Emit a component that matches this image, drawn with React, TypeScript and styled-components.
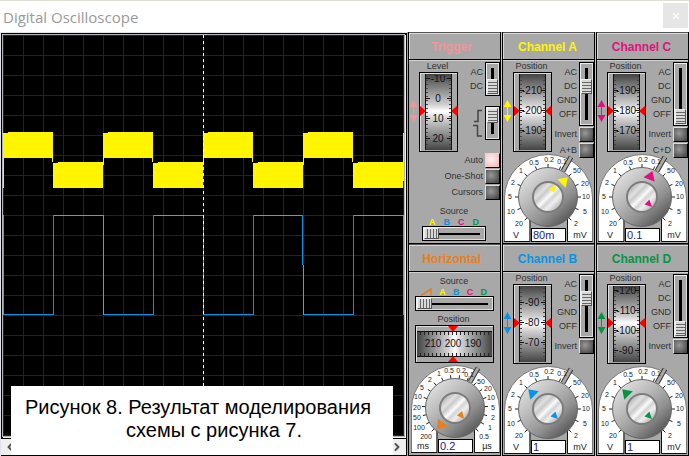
import React, { useState } from "react";
import styled, { createGlobalStyle, css } from "styled-components";
import { X, ChevronLeft, ChevronRight } from "lucide-react";

const YELLOW = "#fff500";
const BLUE = "#0a93e0";
const MAGENTA = "#e0117f";
const GREEN = "#079445";
const PINK = "#f0959b";
const ORANGE = "#e87e1c";
const PANEL = "#a8a8a8";

const GlobalStyle = createGlobalStyle`
  * { box-sizing: border-box; }
  body {
    margin: 0;
    background: ${PANEL};
    color: #303030;
    font-family: "Liberation Sans", Arial, sans-serif;
    font-size: 9px;
  }
  input, button { font: inherit; color: inherit; margin: 0; padding: 0; border-radius: 0; }
`;

const Window = styled.div`
  min-height: 100vh;
  display: flex;
  flex-direction: column;
`;

const TitleBar = styled.header`
  height: 32px;
  flex: none;
  display: flex;
  align-items: flex-start;
  justify-content: space-between;
  background: #fff;
  border-top: 1px solid #dedfd3;
  padding: 2px 1px 0 3px;
`;

const Title = styled.h1`
  margin: 0;
  font: 400 15px/28px "Open Sans", "Noto Sans", sans-serif;
  color: #999;
`;

const CloseButton = styled.button`
  width: 25px;
  height: 25px;
  display: flex;
  align-items: center;
  justify-content: center;
  border: 0;
  background: #e6e6e6;
  color: #fff;
`;

const Main = styled.main`
  flex: 1;
  display: grid;
  grid-template-columns: minmax(0, 1fr) auto;
  column-gap: 1px;
`;

/* ---------- scope screen ---------- */

const Scope = styled.section`
  position: relative;
  display: flex;
  flex-direction: column;
  padding: 1px 0 0 1px;
  background: #e3e1e8;
`;

const Screen = styled.div`
  flex: 1;
  display: flex;
  min-height: 0;
  border: 1px solid #000;
  background: #000;

  svg {
    flex: 1;
    min-width: 0;
    border: 1px solid #b4b4b4;
    box-shadow: 1px 1px 0 #f0f0f0;
    margin: 0 1px 1px 0;
  }
`;

const ScrollBar = styled.div`
  height: 17px;
  flex: none;
  display: flex;
  align-items: center;
  justify-content: space-between;
  background: #f0f0f0;
  border-right: 1px solid #000;
  border-bottom: 1px solid #000;
`;

const ScrollButton = styled.button`
  width: 18px;
  height: 16px;
  display: flex;
  align-items: center;
  justify-content: center;
  border: 0;
  background: transparent;
  color: #555;
`;

const Caption = styled.p`
  position: absolute;
  left: 11px;
  right: 14px;
  bottom: 1px;
  margin: 0;
  padding: 10px 14px 13px 6px;
  background: #fff;
  color: #000;
  font-size: 20px;
  line-height: 23px;
  text-align: center;
`;

const CaptionEnd = styled.span`
  display: block;
  padding-left: 32px;
`;

function Traces() {
  const highs = [0, 100, 200, 300];
  const lows = [50, 150, 250, 350];
  const grid = Array.from({ length: 21 }, (_, i) => i * 20);
  return (
    <svg viewBox="0 0 401 401" height="403" preserveAspectRatio="none" shapeRendering="crispEdges" role="img" aria-label="Waveforms">
      {grid.map((p) => (
        <g key={p} fill="#003c00">
          <rect x={p} y={0} width={1} height={401} />
          <rect x={0} y={p} width={401} height={1} />
        </g>
      ))}
      {highs.map((x) => (
        <g key={x} fill={YELLOW}>
          <rect x={x} y={98} width={50} height={25} />
          <rect x={x + 5} y={97} width={45} height={1} />
          <rect x={x} y={98} width={1} height={x === 0 ? 55 : 32} />
          <rect x={x + 49} y={109} width={1} height={18} />
        </g>
      ))}
      {lows.map((x) => (
        <g key={x} fill={YELLOW}>
          <rect x={x} y={128} width={50} height={25} />
          <rect x={x + 5} y={127} width={45} height={1} />
        </g>
      ))}
      <rect x={400} y={98} width={1} height={48} fill={YELLOW} />
      {highs.map((x) => (
        <g key={x}>
          <rect x={x} y={279} width={50} height={1} fill={BLUE} />
          <rect x={x} y={180} width={1} height={100} fill="#14bfdc" />
        </g>
      ))}
      {lows.map((x) => (
        <g key={x}>
          <rect x={x} y={180} width={50} height={1} fill="#14bfdc" />
          <rect x={x} y={180} width={1} height={100} fill={BLUE} />
        </g>
      ))}
      <rect x={299} y={180} width={1} height={50} fill={BLUE} />
      <rect x={300} y={180} width={1} height={50} fill="#003c00" />
      <rect x={400} y={180} width={1} height={100} fill="#14bfdc" />
      <line x1={200.5} y1={0} x2={200.5} y2={401} stroke="#fff" strokeDasharray="3 3" />
    </svg>
  );
}

/* ---------- control panels ---------- */

const Panels = styled.section`
  display: grid;
  grid-template-columns: repeat(3, 93px);
  grid-template-rows: 1fr 1fr;
  column-gap: 1px;
  background: #c4c4c4;
`;

const Panel = styled.section`
  display: flex;
  flex-direction: column;
  border: solid #000;
  border-width: 0 1px 1px;
  background: ${PANEL};
`;

const PanelTitle = styled.h2<{ $color: string; $shift?: boolean }>`
  height: 28px;
  margin: 0;
  padding-right: ${(p) => (p.$shift ? "6px" : "2px")};
  flex: none;
  border-top: 1px solid #555;
  border-bottom: 1px solid #000;
  box-shadow: inset 1px 1px 0 #d8d8d8, 0 1px 0 #d0d0d0;
  color: ${(p) => p.$color};
  font-size: 12px;
  font-weight: 700;
  line-height: 28px;
  text-align: center;
`;

const Upper = styled.div`
  display: grid;
  grid-template-columns: 10px 39px minmax(0, 1fr);
  grid-template-rows: 10px auto;
  padding-top: 2px;
`;

const RollerLabel = styled.label`
  grid-column: 2;
  grid-row: 1;
  justify-self: center;
  line-height: 9px;
  margin-right: 2px;
  white-space: nowrap;
`;

const ArrowCell = styled.div`
  grid-column: 1;
  grid-row: 2;
  display: flex;
  align-items: center;
  height: 78px;
`;

const RollerBox = styled.div`
  grid-column: 2;
  grid-row: 2;
  position: relative;
  height: 80px;

  svg { display: block; }
`;

const WideRollerBox = styled(RollerBox)`
  width: 79px;
  height: 38px;
`;

const HiddenRange = styled.input`
  position: absolute;
  inset: 0;
  width: 100%;
  height: 100%;
  opacity: 0;
`;

const Controls = styled.div`
  grid-column: 3;
  grid-row: 1 / span 2;
  display: flex;
  flex-direction: column;
`;

const SwitchRow = styled.div`
  display: flex;
  justify-content: flex-end;
  gap: 2px;
`;

const Options = styled.div`
  padding-top: 3px;
  line-height: 14px;
  text-align: right;
`;

const track = css`
  border: 1px solid #000;
  box-shadow: inset 1px 1px 0 #eee, inset -1px -1px 0 #ddd;
`;

const thumbColors = css`
  appearance: none;
  border: 1px solid #eee;
  border-right-color: #555;
  border-bottom-color: #555;
  border-radius: 0;
`;

const VerticalBox = styled.div`
  ${track}
  width: 15px;
  padding: 1px;
  display: flex;
  flex: none;
`;

const VerticalRange = styled.input<{ $length: number }>`
  appearance: none;
  writing-mode: vertical-lr;
  width: 11px;
  height: ${(p) => p.$length}px;
  background: linear-gradient(#000, #000) center / 3px calc(100% - 8px) no-repeat;

  &::-webkit-slider-thumb {
    ${thumbColors}
    width: 11px;
    height: 15px;
    background: repeating-linear-gradient(#d8d8d8 0 2px, #666 2px 3px);
  }
`;

const HorizontalBox = styled.div<{ $width: number }>`
  ${track}
  width: ${(p) => p.$width}px;
  padding: 1px;
  display: flex;
  margin: 0 auto;
`;

const HorizontalRange = styled.input`
  appearance: none;
  width: 100%;
  height: 11px;
  background: linear-gradient(#000, #000) center / calc(100% - 8px) 2px no-repeat;

  &::-webkit-slider-thumb {
    ${thumbColors}
    width: 15px;
    height: 11px;
    background: repeating-linear-gradient(90deg, #d8d8d8 0 2px, #666 2px 3px);
  }
`;

const ButtonRow = styled.div`
  display: flex;
  align-items: center;
  justify-content: flex-end;
  gap: 2px;
  height: 16px;
  white-space: nowrap;
`;

const PushButton = styled.button<{ $lit?: boolean }>`
  width: 15px;
  height: 15px;
  flex: none;
  border: 1px solid #ddd;
  border-right-color: #000;
  border-bottom-color: #000;
  background: ${(p) =>
    p.$lit
      ? "radial-gradient(circle at 40% 40%, #fff0f0, #f3b4b4)"
      : "radial-gradient(circle at 40% 40%, #989898, #3c3c3c)"};
`;

const DialBox = styled.div<{ $overlap?: boolean }>`
  position: relative;
  width: 89px;
  margin: ${(p) => (p.$overlap ? "-4px" : "2px")} 0 0 1px;

  svg { display: block; }
`;

const HorizontalDialBox = styled(DialBox)`
  margin-left: 2px;
`;

const DialInput = styled.input`
  position: absolute;
  left: 27px;
  bottom: 0;
  width: 35px;
  height: 14px;
  border: 1px solid #000;
  background: #fff;
  color: #1c1c8c;
  font-size: 11px;
  line-height: 12px;
  padding-left: 1px;
  outline: 0;
`;

const SourceBlock = styled.div<{ $top: number }>`
  margin-top: ${(p) => p.$top}px;
  display: flex;
  flex-direction: column;
  text-align: center;
  line-height: 12px;
  padding-right: 1px;
`;

const SourceLetters = styled.div<{ $width: number }>`
  display: flex;
  justify-content: space-between;
  align-items: center;
  width: ${(p) => p.$width}px;
  height: 9px;
  margin: 0 auto;
  font-weight: 700;
`;

const Letter = styled.span<{ $color: string }>`
  color: ${(p) => p.$color};
`;

const CenteredLabel = styled.label`
  display: block;
  padding: 3px 2px 0 0;
  text-align: center;
  line-height: 10px;
`;

const Stack = styled.div<{ $gap: number }>`
  display: flex;
  flex-direction: column;
  gap: ${(p) => p.$gap}px;
`;

const EdgeIcons = styled.svg`
  flex: none;
`;

function UpDown({ color }: { color: string }) {
  return (
    <svg width="9" height="24" viewBox="0 0 9 24" fill={color} aria-hidden="true">
      <path d="M4.5 1 8.5 8H.5zM4.5 23 .5 16h8z" />
      <path d="M4 7h1v10H4z" />
    </svg>
  );
}

type Mark = [string, number];

function Roller({ id, marks }: { id: string; marks: Mark[] }) {
  const ticks = Array.from({ length: 18 }, (_, i) => 5 + i * 4);
  return (
    <RollerBox>
      <svg width="39" height="80" viewBox="0 0 39 80">
        <defs>
          <linearGradient id={`${id}-drum`} x1="0" y1="0" x2="0" y2="1">
            <stop offset="0" stopColor="#444" />
            <stop offset=".2" stopColor="#8a8a8a" />
            <stop offset=".4" stopColor="#cfcfcf" />
            <stop offset=".49" stopColor="#fff" />
            <stop offset=".58" stopColor="#d4d4d4" />
            <stop offset=".8" stopColor="#8a8a8a" />
            <stop offset="1" stopColor="#444" />
          </linearGradient>
          <clipPath id={`${id}-clip`}>
            <rect x="7" y="3" width="25" height="74" />
          </clipPath>
        </defs>
        <rect x=".5" y=".5" width="38" height="79" fill={PANEL} stroke="#000" />
        <path d="M1.500 79V1.500H38" fill="none" stroke="#ddd" />
        <rect x="6" y="2" width="27" height="76" fill="#111" />
        <rect x="7" y="2" width="25" height="76" fill={`url(#${id}-drum)`} />
        <g clipPath={`url(#${id}-clip)`}>
          <path d={ticks.map((y) => `M7 ${y - 0.5}h2M30 ${y - 0.5}h2`).join("")} stroke="#444" />
          {marks.map(([text, y]) => (
            <g key={text}>
              <path d={`M7 ${y + 0.5}h4M28 ${y + 0.5}h4`} stroke="#111" />
              <text x="19" y={y + 4} textAnchor="middle" fontSize="10" fill="#101018">
                {text}
              </text>
            </g>
          ))}
        </g>
        <path d="M1 34v10l6-5zM38 34v10l-6-5z" fill="#f00" />
      </svg>
      <HiddenRange id={id} type="range" />
    </RollerBox>
  );
}

function WideRoller({ id }: { id: string }) {
  const ticks = Array.from({ length: 18 }, (_, i) => 5.5 + i * 4);
  return (
    <WideRollerBox>
      <svg width="79" height="38" viewBox="0 0 79 38">
        <defs>
          <linearGradient id="wide-drum">
            <stop offset="0" stopColor="#444" />
            <stop offset=".2" stopColor="#8a8a8a" />
            <stop offset=".42" stopColor="#d4d4d4" />
            <stop offset=".5" stopColor="#fff" />
            <stop offset=".58" stopColor="#d4d4d4" />
            <stop offset=".8" stopColor="#8a8a8a" />
            <stop offset="1" stopColor="#444" />
          </linearGradient>
        </defs>
        <rect x=".5" y=".5" width="78" height="37" fill={PANEL} stroke="#000" />
        <path d="M1.500 37V1.500H78" fill="none" stroke="#ddd" />
        <rect x="2" y="6" width="75" height="26" fill="#111" />
        <rect x="2" y="7" width="75" height="24" fill="url(#wide-drum)" />
        <path d={ticks.map((x) => `M${x} 7v3M${x} 28v3`).join("")} stroke="#222" />
        {([["210", 18], ["200", 38], ["190", 58]] as Mark[]).map(([text, x]) => (
          <text key={text} x={x} y="22" textAnchor="middle" fontSize="10" fill="#101018">
            {text}
          </text>
        ))}
        <path d="M33 1h10l-5 6zM33 37h10l-5-6z" fill="#f00" />
      </svg>
      <HiddenRange id={id} type="range" />
    </WideRollerBox>
  );
}

type Tick = [string, number, number];

const VOLT_TICKS: Tick[] = [
  ["20", 15, 70], ["10", 7, 58], ["5", 6, 43], ["2", 9, 29], ["1", 17, 17],
  ["0.5", 30, 9], ["0.2", 45, 6], ["0.1", 58, 8], ["50", 73, 17], ["20", 81, 30],
  ["10", 82, 43], ["5", 81, 58], ["2", 72, 70],
];

const TIME_TICKS: Tick[] = [
  ["200", 15, 72], ["100", 8, 63], ["50", 6, 53], ["20", 6, 43], ["10", 7, 32],
  ["5", 11, 23], ["2", 19, 15], ["1", 28, 9], ["0.5", 38, 6], ["0.2", 50, 6],
  ["0.1", 58, 10], ["50", 70, 17], ["20", 77, 24], ["10", 80, 33], ["5", 82, 43],
  ["2", 82, 53], ["1", 79, 63], ["0.5", 73, 72],
];

interface KnobProps {
  id: string;
  label: string;
  color: string;
  ticks: Tick[];
  units: [string, string];
  outer: number;
  inner: number;
}

function Knob({ id, label, color, ticks, units, outer, inner }: KnobProps) {
  const spokes = ticks
    .map((_, i) => {
      const a = ((-135 + (270 * i) / (ticks.length - 1)) * Math.PI) / 180;
      const s = Math.sin(a);
      const c = -Math.cos(a);
      return `M${44 + 29 * s} ${43 + 29 * c}L${44 + 33 * s} ${43 + 33 * c}`;
    })
    .join("");
  return (
    <svg width="89" height="88" viewBox="0 0 89 88" role="img" aria-label={label}>
      <defs>
        <linearGradient id={`${id}-body`} x1=".15" y1=".1" x2=".85" y2=".9">
          <stop offset="0" stopColor="#dedede" />
          <stop offset=".35" stopColor="#bababa" />
          <stop offset=".7" stopColor="#8f8f8f" />
          <stop offset="1" stopColor="#565656" />
        </linearGradient>
        <linearGradient id={`${id}-cap`} x1=".1" y1=".1" x2=".9" y2=".9">
          <stop offset="0" stopColor="#a8a8a8" />
          <stop offset=".25" stopColor="#e0e0e0" />
          <stop offset=".35" stopColor="#cacaca" />
          <stop offset=".5" stopColor="#fafafa" />
          <stop offset=".6" stopColor="#d4d4d4" />
          <stop offset=".72" stopColor="#efefef" />
          <stop offset="1" stopColor="#a8a8a8" />
        </linearGradient>
      </defs>
      <path d="M.5 87.500V44A44 43.500 0 0 1 88.500 44V87.500H63.500V60H26V87.500z" fill="#fff" stroke="#777" />
      <rect x="26" y="60" width="38" height="28" fill={PANEL} />
      <path d="M26 64v23.500M63.500 64v23.500M0 87.500h26M63.500 87.500h25" stroke="#111" />
      <path d={spokes} stroke="#222" />
      <path d="M59 17 67 3" stroke="#333" strokeWidth="5" />
      <path d="M59 17 67 3" stroke={PANEL} strokeWidth="3" />
      {ticks.map(([text, x, y]) => (
        <text key={`${text}-${x}`} x={x} y={y + 2} textAnchor="middle" fontSize="7" fill="#222">
          {text}
        </text>
      ))}
      <text x="12" y="84" textAnchor="middle" fontSize="9" fill="#222">{units[0]}</text>
      <text x="76" y="84" textAnchor="middle" fontSize="9" fill="#222">{units[1]}</text>
      <circle cx="44" cy="43" r="29.500" fill={`url(#${id}-body)`} stroke="#666" />
      <circle cx="44" cy="43" r="15" fill={`url(#${id}-cap)`} stroke="#7c7c7c" strokeWidth="2" />
      <path d="M44 15 50 24H38z" fill={color} transform={`rotate(${outer} 44 43)`} />
      <path d="M44 29 47.500 36H40.500z" fill={color} transform={`rotate(${inner} 44 43)`} />
    </svg>
  );
}

interface ChannelProps {
  name: string;
  color: string;
  marks: Mark[];
  coupling: number;
  sum?: string;
  scale: string;
  outer: number;
  inner: number;
}

function Toggle({ id, label, lit }: { id: string; label: string; lit?: boolean }) {
  const [on, setOn] = useState(!!lit);
  return (
    <ButtonRow>
      <label htmlFor={id}>{label}</label>
      <PushButton id={id} type="button" $lit={on} aria-pressed={on} onClick={() => setOn(!on)} />
    </ButtonRow>
  );
}

function Channel({ name, color, marks, coupling, sum, scale, outer, inner }: ChannelProps) {
  const id = `channel-${name.toLowerCase()}`;
  return (
    <Panel>
      <PanelTitle $color={color}>Channel {name}</PanelTitle>
      <Upper>
        <RollerLabel htmlFor={`${id}-pos`}>Position</RollerLabel>
        <ArrowCell>
          <UpDown color={color} />
        </ArrowCell>
        <Roller id={`${id}-pos`} marks={marks} />
        <Controls>
          <SwitchRow>
            <Options>
              <div>AC</div>
              <div>DC</div>
              <div>GND</div>
              <div>OFF</div>
            </Options>
            <VerticalBox>
              <VerticalRange $length={60} type="range" min={0} max={3} defaultValue={coupling} aria-label={`Channel ${name} coupling`} />
            </VerticalBox>
          </SwitchRow>
          <Toggle id={`${id}-invert`} label="Invert" />
          {sum ? <Toggle id={`${id}-sum`} label={sum} /> : <ButtonRow />}
        </Controls>
      </Upper>
      <DialBox $overlap>
        <Knob id={id} label={`Channel ${name} scale`} color={color} ticks={VOLT_TICKS} units={["V", "mV"]} outer={outer} inner={inner} />
        <DialInput defaultValue={scale} aria-label={`Channel ${name} volts per division`} />
      </DialBox>
    </Panel>
  );
}

function Trigger() {
  return (
    <Panel>
      <PanelTitle $color={PINK} $shift>Trigger</PanelTitle>
      <Upper>
        <RollerLabel htmlFor="trigger-level">Level</RollerLabel>
        <ArrowCell>
          <UpDown color={PINK} />
        </ArrowCell>
        <Roller id="trigger-level" marks={[["-10", 6], ["0", 26], ["10", 46], ["20", 66]]} />
        <Controls>
          <Stack $gap={10}>
            <SwitchRow>
              <Options>
                <div>AC</div>
                <div>DC</div>
              </Options>
              <VerticalBox>
                <VerticalRange $length={30} type="range" min={0} max={1} defaultValue={1} aria-label="Trigger coupling" />
              </VerticalBox>
            </SwitchRow>
            <SwitchRow>
              <EdgeIcons width="10" height="32" viewBox="0 0 10 32" fill="none" stroke="#444" strokeWidth="1.500" aria-hidden="true">
                <path d="M1 15.500h4V4.500h4M0 19.500h4.500V30H9" />
              </EdgeIcons>
              <VerticalBox>
                <VerticalRange $length={30} type="range" min={0} max={1} defaultValue={0} aria-label="Trigger edge" />
              </VerticalBox>
            </SwitchRow>
          </Stack>
        </Controls>
      </Upper>
      <Toggle id="auto" label="Auto" lit />
      <Toggle id="one-shot" label="One-Shot" />
      <Toggle id="cursors" label="Cursors" />
      <SourceBlock $top={5}>
        <label htmlFor="trigger-source">Source</label>
        <SourceLetters $width={50}>
          <Letter $color={YELLOW}>A</Letter>
          <Letter $color={BLUE}>B</Letter>
          <Letter $color={MAGENTA}>C</Letter>
          <Letter $color={GREEN}>D</Letter>
        </SourceLetters>
        <HorizontalBox $width={64}>
          <HorizontalRange id="trigger-source" type="range" min={0} max={3} defaultValue={0} />
        </HorizontalBox>
      </SourceBlock>
    </Panel>
  );
}

const WideRollerRow = styled.div`
  display: flex;
  padding-left: 6px;
`;

function Horizontal() {
  return (
    <Panel>
      <PanelTitle $color={ORANGE} $shift>Horizontal</PanelTitle>
      <SourceBlock $top={3}>
        <label htmlFor="time-source">Source</label>
        <SourceLetters $width={66}>
          <svg width="11" height="8" viewBox="0 0 11 8" fill="none" stroke={ORANGE} strokeWidth="1.500" aria-hidden="true">
            <path d="M0 7.500 10 1v6.500" />
          </svg>
          <Letter $color={YELLOW}>A</Letter>
          <Letter $color={BLUE}>B</Letter>
          <Letter $color={MAGENTA}>C</Letter>
          <Letter $color={GREEN}>D</Letter>
        </SourceLetters>
        <HorizontalBox $width={79}>
          <HorizontalRange id="time-source" type="range" min={0} max={4} defaultValue={0} />
        </HorizontalBox>
      </SourceBlock>
      <Stack $gap={1}>
        <CenteredLabel htmlFor="time-position">Position</CenteredLabel>
        <WideRollerRow>
          <WideRoller id="time-position" />
        </WideRollerRow>
      </Stack>
      <HorizontalDialBox>
        <Knob id="time" label="Time base" color={ORANGE} ticks={TIME_TICKS} units={["ms", "µs"]} outer={-140} inner={140} />
        <DialInput defaultValue="0.2" aria-label="Time per division" />
      </HorizontalDialBox>
    </Panel>
  );
}

export default function App() {
  return (
    <>
      <GlobalStyle />
      <Window>
        <TitleBar>
          <Title>Digital Oscilloscope</Title>
          <CloseButton type="button" aria-label="Close">
            <X size={10} strokeWidth={3} />
          </CloseButton>
        </TitleBar>
        <Main>
          <Scope>
            <Screen>
              <Traces />
            </Screen>
            <ScrollBar>
              <ScrollButton type="button" aria-label="Scroll left">
                <ChevronLeft size={12} strokeWidth={4} />
              </ScrollButton>
              <ScrollButton type="button" aria-label="Scroll right">
                <ChevronRight size={12} strokeWidth={4} />
              </ScrollButton>
            </ScrollBar>
            <Caption>
              Рисунок 8. Результат моделирования
              <CaptionEnd>схемы с рисунка 7.</CaptionEnd>
            </Caption>
          </Scope>
          <Panels>
            <Trigger />
            <Channel name="A" color={YELLOW} marks={[["-210", 18], ["-200", 38], ["-190", 58]]} coupling={1} sum="A+B" scale="80m" outer={45} inner={30} />
            <Channel name="C" color={MAGENTA} marks={[["-190", 18], ["-180", 38], ["-170", 58]]} coupling={3} sum="C+D" scale="0.1" outer={22} inner={135} />
            <Horizontal />
            <Channel name="B" color={BLUE} marks={[["-90", 18], ["-80", 38], ["-70", 58]]} coupling={1} scale="1" outer={-45} inner={135} />
            <Channel name="D" color={GREEN} marks={[["-120", 6], ["-110", 26], ["-100", 46], ["-90", 66]]} coupling={3} scale="1" outer={-45} inner={135} />
          </Panels>
        </Main>
      </Window>
    </>
  );
}
